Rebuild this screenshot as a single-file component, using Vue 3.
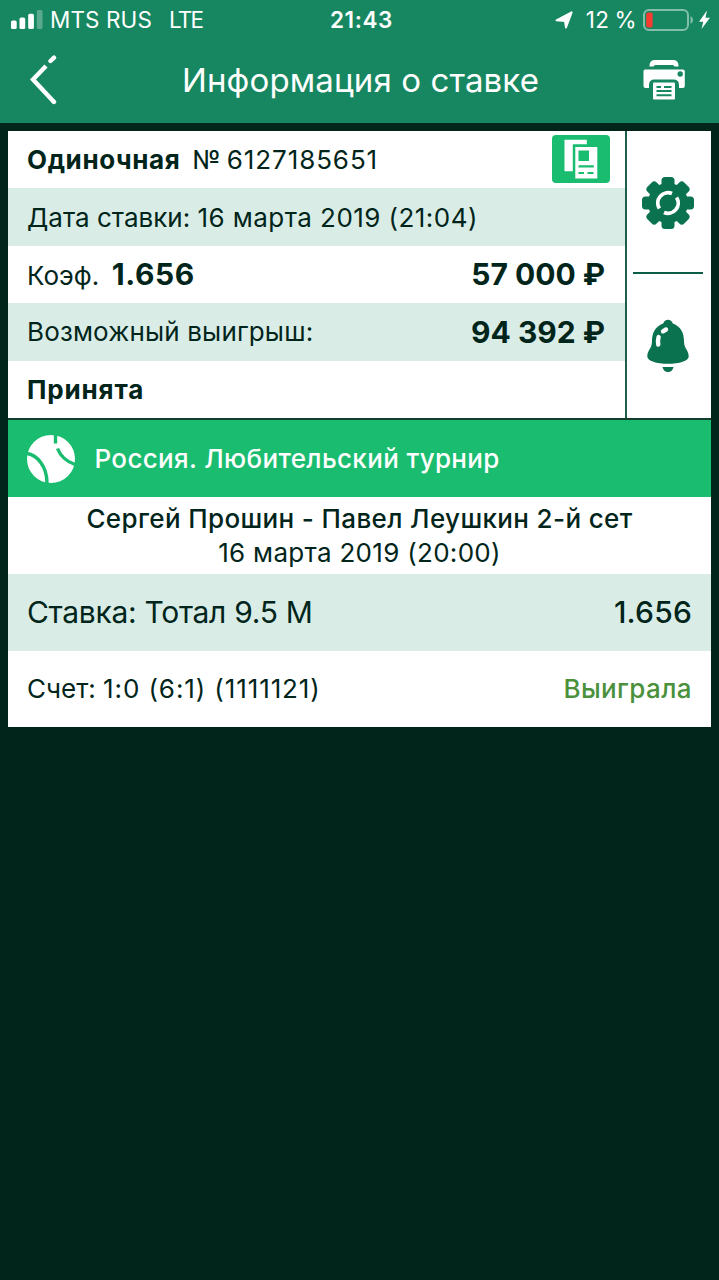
<script setup>
const bet = {
  type: 'Одиночная',
  number: '№ 6127185651',
  date: '16 марта 2019 (21:04)',
  odds: '1.656',
  stake: '57 000 ₽',
  payout: '94 392 ₽',
  status: 'Принята',
}
const event = {
  league: 'Россия. Любительский турнир',
  teams: 'Сергей Прошин - Павел Леушкин 2-й сет',
  time: '16 марта 2019 (20:00)',
  pick: 'Ставка: Тотал 9.5 М',
  score: '1:0 (6:1) (1111121)',
  result: 'Выиграла',
}
const teeth = [0, 45, 90, 135, 180, 225, 270, 315]
</script>

<template>
  <div class="screen">
    <header class="top">
      <div class="status">
        <div class="side">
          <svg class="signal" width="32" height="20" viewBox="0 0 32 20">
            <rect x="0" y="10.5" width="5.7" height="8.5" rx="1.6" fill="#fff" />
            <rect x="8.5" y="7.5" width="5.7" height="11.5" rx="1.6" fill="#fff" />
            <rect x="17.2" y="3.7" width="5.7" height="15.3" rx="1.6" fill="#fff" />
            <rect x="25.8" y="0" width="5.7" height="19" rx="1.6" fill="#59a98c" />
          </svg>
          <span class="carrier">MTS RUS</span>
          <span class="net">LTE</span>
        </div>
        <span class="clock">21:43</span>
        <div class="side right">
          <svg class="loc" width="18" height="18" viewBox="0 0 18 18"><path d="M16.600 1.400 11 16.500 10 10.100 1.500 9.300Z" fill="#fff" stroke="#fff" stroke-width="2" stroke-linejoin="round" /></svg>
          <span class="percent">12 %</span>
          <svg class="battery" width="70" height="24" viewBox="0 0 70 24">
            <rect x="1" y="2" width="44" height="20" rx="5" fill="none" stroke="#82bfa9" stroke-width="2" />
            <rect x="3.2" y="4.5" width="6.4" height="15" rx="1.8" fill="#f83b30" />
            <path d="M47.500 8v8q2.600-1.300 2.600-4t-2.600-4" fill="#82bfa9" />
            <path d="M64 2.500 56 13.800h4.300L58.500 21l8.500-11.300H62.500Z" fill="#fff" />
          </svg>
        </div>
      </div>
      <div class="nav">
        <svg class="back" width="30" height="50" viewBox="0 0 30 50" fill="none" stroke="#fff" stroke-width="4.4">
          <path d="M17 11 4 24.500 25 47" />
          <path d="m25 47-.1-.1M21.500 6 25 2.700" stroke-linecap="round" />
        </svg>
        <h1>Информация о ставке</h1>
        <svg class="printer" width="42" height="40" viewBox="0 0 42 40">
          <path d="M6.500 6.500v-.8Q6.500 0 12 0h18q5.500 0 5.500 5.700v.8h-4Q31 5 29.500 5h-17Q11 5 10.500 6.500Z" fill="#fff" />
          <path d="M2 9.500h38q1.800 0 1.800 1.800V26q0 2-2 2H36v-3q0-5.500-5.500-5.500h-19Q6 19.500 6 25v3H2.500q-2 0-2-2V11.300q0-1.800 1.500-1.800" fill="#fff" />
          <circle cx="37.200" cy="14" r="2.700" fill="#178761" />
          <rect x="10" y="22.500" width="22" height="17" rx="1" fill="#fff" />
          <path d="M13.500 27h4.500m3 0h7.500M13.500 31h15M13.500 35.300h15" fill="none" stroke="#178761" stroke-width="2" />
        </svg>
      </div>
    </header>

    <main class="card">
      <section class="summary">
        <div class="rows">
          <div class="row">
            <span><b class="type">{{ bet.type }}</b><span class="num">{{ bet.number }}</span></span>
            <svg class="copy" width="58" height="48" viewBox="0 0 58 48">
              <rect width="58" height="48" rx="4" fill="#1abd6f" />
              <path d="M12.500 4.800h22.300v4.500H20.800v27h-8.300Z" fill="#fff" />
              <rect x="23.300" y="12" width="22" height="31.500" fill="#fff" />
              <path d="M26.500 15.500H37v10.500H26.500z" fill="#1abd6f" />
              <path d="M26.500 31.300h15.300M26.500 38h5.500m3.500 0h6" stroke="#1abd6f" stroke-width="2.2" />
            </svg>
          </div>
          <div class="row tint"><span>Дата ставки: <span class="date">{{ bet.date }}</span></span></div>
          <div class="row">
            <span class="coef">Коэф.<b class="money odds">{{ bet.odds }}</b></span>
            <b class="money">{{ bet.stake }}</b>
          </div>
          <div class="row tint">
            <span class="win">Возможный выигрыш:</span>
            <b class="money">{{ bet.payout }}</b>
          </div>
          <div class="row"><b class="accepted">{{ bet.status }}</b></div>
        </div>
        <aside class="tools">
          <div class="tool gear">
            <svg width="52" height="52" viewBox="-26 -26 52 52">
              <circle r="20" fill="#0b7250" />
              <rect v-for="a in teeth" :key="a" x="-6.5" y="-26" width="13" height="16" rx="3.5" fill="#0b7250" :transform="`rotate(${a})`" />
              <path d="M-8.600 5.500A10.200 10.200 0 0 1 4-9.400M8.600-5.500A10.200 10.200 0 0 1-4 9.400" fill="none" stroke="#fff" stroke-width="3.8" />
            </svg>
          </div>
          <div class="tool">
            <svg width="42" height="54" viewBox="0 0 42 54">
              <path d="M21 .8q3.400 0 4.800 3.600C34 7.500 37 14 37 22c0 8 4.700 9 4.700 15.500 0 4.500-9.200 7.300-20.700 7.300S.3 42 .3 37.500C.3 31 5 30 5 22c0-8 3-14.500 11.200-17.600Q17.600.8 21 .8Z" fill="#0b7250" />
              <path d="M15.500 48h11q-1 5-5.500 5t-5.500-5" fill="#0b7250" />
              <path d="M11.300 25.500q-.7-4 .3-7.500" stroke="#fff" stroke-width="4.4" stroke-linecap="round" fill="none" />
              <path d="m16 12.300 3-1.800" stroke="#fff" stroke-width="4.4" stroke-linecap="round" fill="none" />
            </svg>
          </div>
        </aside>
      </section>

      <section class="league">
        <svg width="48" height="48" viewBox="0 0 48 48">
          <circle cx="24" cy="24" r="24" fill="#fff" />
          <path d="M0 18.500C10 20 20 31 20 48M28.500-1v9.500M30.500 13.500Q35 25 48 29.500" fill="none" stroke="#1abd6f" stroke-width="3.4" />
        </svg>
        <span>{{ event.league }}</span>
      </section>
      <section class="event">
        <span class="teams">{{ event.teams }}</span>
        <span class="time">{{ event.time }}</span>
      </section>
      <section class="line tint">
        <span class="pick">{{ event.pick }}</span>
        <span class="rate">{{ bet.odds }}</span>
      </section>
      <section class="line">
        <span>Счет: <span class="score">{{ event.score }}</span></span>
        <span class="result">{{ event.result }}</span>
      </section>
    </main>
  </div>
</template>

<style>
body { background: #01251b; }
</style>

<style scoped>
.screen { width: 719px; height: 1280px; overflow: hidden; background: #01251b; color: #01251b; font-family: Inter, "Liberation Sans", sans-serif; white-space: nowrap; }
svg { display: block; flex: none; }
.top { height: 123px; background: #178761; color: #fff; }
.status { display: grid; grid-template-columns: 1fr auto 1fr; align-items: center; height: 39px; font-size: 22.5px; }
.side { display: flex; align-items: center; height: 39px; }
.signal { margin-left: 11px; }
.carrier { margin-left: 7px; letter-spacing: 0.1px; }
.net { margin-left: 17px; letter-spacing: -1.8px; }
.clock { font-weight: 600; padding-left: 4px; letter-spacing: 0.6px; }
.right { justify-content: flex-end; }
.percent { margin-left: 13px; letter-spacing: 0.5px; word-spacing: -2px; }
.battery { margin-left: 6px; margin-right: 6px; }
.nav { display: flex; align-items: center; height: 82px; }
.back { margin-left: 29px; }
h1 { flex: 1; margin: 0; padding-left: 19px; text-align: center; font-size: 33px; line-height: 40px; font-weight: 400; letter-spacing: 0.12px; }
.printer { margin-right: 34px; }
.card { margin: 8px 8px 0; background: #fff; }
.summary { display: flex; height: 287px; border-bottom: 2px solid #123d2c; }
.rows { flex: 1; display: grid; grid-template-rows: repeat(5, 57.4px); }
.row { display: flex; align-items: center; justify-content: space-between; padding: 0 20px 0 19px; font-size: 26px; }
.tint { background: #d9ede6; }
.type { letter-spacing: 0.6px; }
.num { margin-left: 12px; letter-spacing: 0.9px; word-spacing: -3px; }
.date { letter-spacing: 0.45px; }
.win { letter-spacing: 0.15px; }
.accepted { letter-spacing: 0.85px; }
.copy { margin: -1px -5px 0 0; }
.money { font-size: 30px; font-weight: 700; line-height: 36px; }
.coef { margin-top: -1px; }
.odds { margin-left: 12.5px; letter-spacing: 0.6px; }
.tools { width: 84px; border-left: 2px solid #1c5f4c; display: grid; grid-template-rows: 141px 146px; }
.tool { display: flex; align-items: center; justify-content: center; margin: 0 8px 0 6px; }
.gear { padding-top: 3px; }
.tool + .tool { border-top: 2px solid #0b5e45; }
.league { display: flex; align-items: center; gap: 19.5px; height: 77px; padding-left: 19px; background: #1abd6f; color: #fff; font-size: 26px; font-weight: 450; letter-spacing: 0.34px; }
.event { display: flex; flex-direction: column; align-items: center; justify-content: center; height: 77px; font-size: 26px; line-height: 34px; }
.teams { font-weight: 500; letter-spacing: 0.37px; }
.time { letter-spacing: 0.3px; }
.line { display: flex; align-items: center; justify-content: space-between; height: 76.5px; padding: 0 19px; font-size: 26px; }
.pick, .rate { font-size: 30px; }
.pick { letter-spacing: -0.3px; }
.rate { font-weight: 500; letter-spacing: 0.2px; }
.score { letter-spacing: 0.9px; }
.result { color: #4b913c; font-weight: 450; letter-spacing: 0.4px; }
</style>
